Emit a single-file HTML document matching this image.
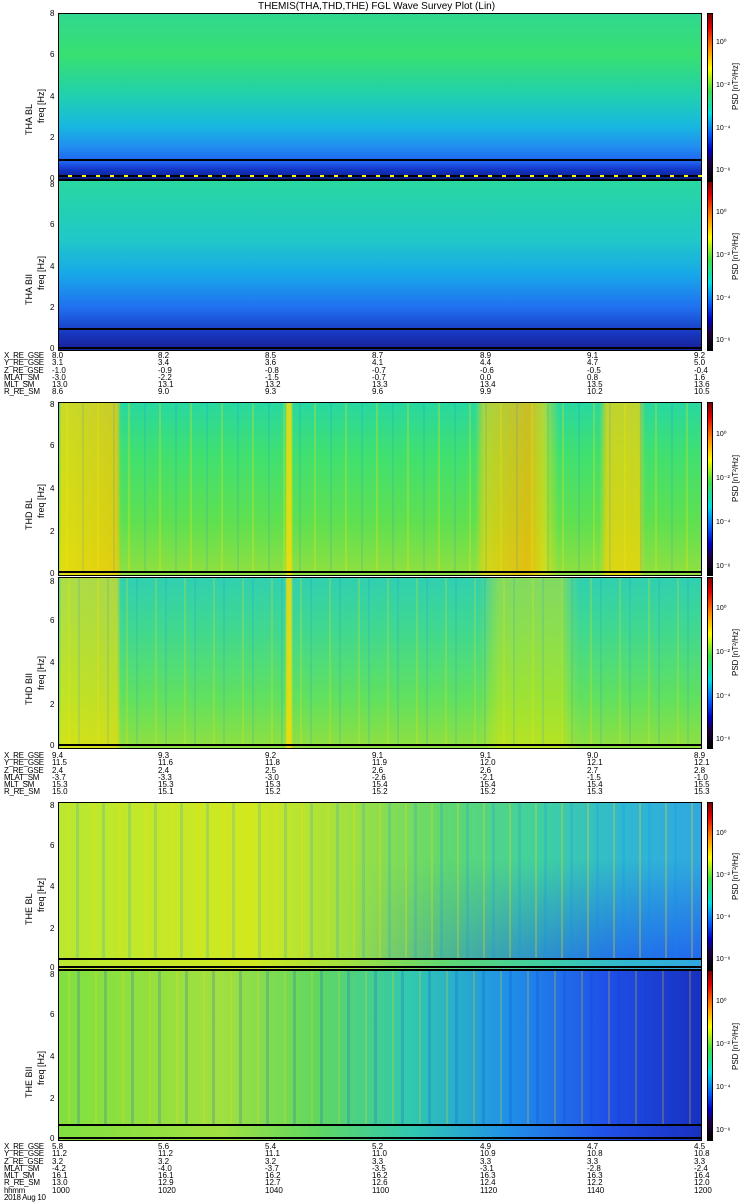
<!DOCTYPE html>
<html><head><meta charset="utf-8"><style>
body{margin:0;width:750px;height:1200px;background:#fff;position:relative;overflow:hidden;font-family:"Liberation Sans",sans-serif;}
.p{position:absolute;left:58px;width:644px;border:1px solid #000;box-sizing:border-box;}
.cb{position:absolute;left:707px;width:6px;border:1px solid #000;box-sizing:border-box;
background:linear-gradient(#7a0000 0%,#e00000 8%,#ff8000 20%,#ffff00 33%,#40e040 46%,#00e0e0 60%,#0060ff 72%,#0000c0 82%,#200040 90%,#000 100%);}
.t{position:absolute;font-size:8px;line-height:7.3px;white-space:pre;color:#000;}
.yl{position:absolute;font-size:9px;transform:rotate(-90deg);transform-origin:left top;white-space:nowrap;}
.ax{position:absolute;font-size:8px;left:50px;}
.bl{position:absolute;left:58px;width:644px;height:2px;background:#000;}
.cl{position:absolute;left:716px;font-size:7px;}
.st{position:absolute;left:59px;width:642px;}
</style></head><body>
<div class="t" style="left:258px;top:2px;font-size:10px;line-height:10px">THEMIS(THA,THD,THE) FGL Wave Survey Plot (Lin)</div>

<!-- THA BL -->
<div class="p" style="top:13px;height:167px;background:linear-gradient(#30d890 0%,#38e070 25%,#20d0b0 50%,#18b8e0 68%,#2090f0 80%,#2060f0 90%,#1030c0 95%,#102080 100%);"></div>
<div class="bl" style="top:159px"></div>
<div class="bl" style="top:175px;background:repeating-linear-gradient(90deg,#000 0 10px,#ff0 10px 14px)"></div>
<!-- THA BII -->
<div class="p" style="top:180px;height:171px;background:linear-gradient(#28d8a0 0%,#20c8c8 35%,#18a8e8 55%,#2070f0 75%,#1838c0 90%,#182098 100%);"></div>
<div class="bl" style="top:328px"></div>
<div class="bl" style="top:347px"></div>
<div class="cb" style="top:13px;height:168px"></div>
<div class="cb" style="top:181px;height:170px"></div>

<!-- THD -->
<div class="p" style="top:402px;height:174px;background:
linear-gradient(90deg,transparent 0,rgba(255,220,0,.75) 2px,rgba(255,200,0,.75) 58px,transparent 62px,transparent 226px,rgba(255,220,0,.8) 228px,rgba(255,220,0,.8) 232px,transparent 234px,transparent 416px,rgba(255,210,0,.6) 425px,rgba(255,180,0,.75) 470px,rgba(255,220,0,.6) 485px,transparent 500px,transparent 540px,rgba(255,210,0,.7) 548px,rgba(255,210,0,.7) 580px,transparent 586px),
linear-gradient(#28d8a0 0%,#40e070 30%,#60e050 70%,#90e040 100%);"></div>
<div class="st" style="top:403px;height:168px;background:repeating-linear-gradient(90deg,transparent 0 7px,rgba(255,230,0,.25) 7px 9px,transparent 9px 23px,rgba(0,120,255,.12) 23px 25px,transparent 25px 31px);"></div>
<div class="bl" style="top:571px"></div>
<div class="p" style="top:577px;height:172px;background:
linear-gradient(90deg,transparent 0,rgba(255,230,0,.6) 2px,rgba(255,220,0,.6) 58px,transparent 62px,transparent 226px,rgba(255,220,0,.8) 228px,rgba(255,220,0,.8) 232px,transparent 234px,transparent 420px,rgba(230,230,0,.45) 440px,rgba(230,230,0,.45) 500px,transparent 520px),
linear-gradient(#30d0b0 0%,#40d890 30%,#60e060 70%,#90e040 100%);"></div>
<div class="st" style="top:578px;height:166px;background:repeating-linear-gradient(90deg,transparent 0 9px,rgba(255,230,0,.2) 9px 11px,transparent 11px 19px,rgba(0,120,255,.12) 19px 21px,transparent 21px 29px);"></div>
<div class="bl" style="top:744px"></div>
<div class="cb" style="top:402px;height:174px"></div>
<div class="cb" style="top:577px;height:172px"></div>

<!-- THE -->
<div class="p" style="top:802px;height:168px;background:
linear-gradient(90deg,#b8e830 0%,#d0e820 30%,#a0e040 45%,#60d870 60%,#40d0a0 75%,#30b8d0 88%,#30a8e0 100%);"></div>
<div class="st" style="top:860px;height:98px;background:linear-gradient(90deg,rgba(30,90,240,0) 45%,rgba(30,90,240,.7) 85%,rgba(30,90,240,.8) 100%);-webkit-mask-image:linear-gradient(180deg,transparent 0%,#000 100%);mask-image:linear-gradient(180deg,transparent 0%,#000 100%);"></div>
<div class="st" style="top:803px;height:155px;background:repeating-linear-gradient(90deg,transparent 0 8px,rgba(255,220,0,.28) 8px 10px,transparent 10px 17px,rgba(0,140,255,.18) 17px 20px,transparent 20px 26px);"></div>
<div class="bl" style="top:958px"></div>
<div class="bl" style="top:966px"></div>
<div class="p" style="top:970px;height:171px;background:
linear-gradient(90deg,#80e040 0%,#a0e040 25%,#60d860 40%,#30c8b0 55%,#2090e8 70%,#2050e8 85%,#1830c0 100%);"></div>
<div class="st" style="top:971px;height:153px;background:repeating-linear-gradient(90deg,transparent 0 9px,rgba(255,220,0,.22) 9px 11px,transparent 11px 18px,rgba(0,60,220,.18) 18px 21px,transparent 21px 27px);"></div>
<div class="bl" style="top:1124px"></div>
<div class="bl" style="top:1137px"></div>
<div class="cb" style="top:802px;height:168px"></div>
<div class="cb" style="top:970px;height:171px"></div>

<!-- y labels -->
<div class="yl" style="left:24px;top:135px">THA BL</div><div class="yl" style="left:36px;top:123px">freq [Hz]</div>
<div class="yl" style="left:24px;top:305px">THA BII</div><div class="yl" style="left:36px;top:290px">freq [Hz]</div>
<div class="yl" style="left:24px;top:530px">THD BL</div><div class="yl" style="left:36px;top:518px">freq [Hz]</div>
<div class="yl" style="left:24px;top:705px">THD BII</div><div class="yl" style="left:36px;top:690px">freq [Hz]</div>
<div class="yl" style="left:24px;top:925px">THE BL</div><div class="yl" style="left:36px;top:912px">freq [Hz]</div>
<div class="yl" style="left:24px;top:1098px">THE BII</div><div class="yl" style="left:36px;top:1085px">freq [Hz]</div>

<div class="ax" style="top:9px">8</div><div class="ax" style="top:50px">6</div><div class="ax" style="top:92px">4</div><div class="ax" style="top:133px">2</div><div class="ax" style="top:174px">0</div>
<div class="ax" style="top:180px">8</div><div class="ax" style="top:220px">6</div><div class="ax" style="top:262px">4</div><div class="ax" style="top:303px">2</div><div class="ax" style="top:344px">0</div>
<div class="ax" style="top:400px">8</div><div class="ax" style="top:441px">6</div><div class="ax" style="top:484px">4</div><div class="ax" style="top:527px">2</div><div class="ax" style="top:569px">0</div>
<div class="ax" style="top:577px">8</div><div class="ax" style="top:616px">6</div><div class="ax" style="top:658px">4</div><div class="ax" style="top:700px">2</div><div class="ax" style="top:741px">0</div>
<div class="ax" style="top:801px">8</div><div class="ax" style="top:841px">6</div><div class="ax" style="top:882px">4</div><div class="ax" style="top:924px">2</div><div class="ax" style="top:963px">0</div>
<div class="ax" style="top:970px">8</div><div class="ax" style="top:1010px">6</div><div class="ax" style="top:1052px">4</div><div class="ax" style="top:1094px">2</div><div class="ax" style="top:1134px">0</div>

<div class="cl" style="top:38px">10⁰</div><div class="cl" style="top:81px">10⁻²</div><div class="cl" style="top:124px">10⁻⁴</div><div class="cl" style="top:166px">10⁻⁶</div>
<div class="cl" style="top:208px">10⁰</div><div class="cl" style="top:251px">10⁻²</div><div class="cl" style="top:294px">10⁻⁴</div><div class="cl" style="top:336px">10⁻⁶</div>
<div class="cl" style="top:430px">10⁰</div><div class="cl" style="top:474px">10⁻²</div><div class="cl" style="top:518px">10⁻⁴</div><div class="cl" style="top:562px">10⁻⁶</div>
<div class="cl" style="top:604px">10⁰</div><div class="cl" style="top:648px">10⁻²</div><div class="cl" style="top:692px">10⁻⁴</div><div class="cl" style="top:735px">10⁻⁶</div>
<div class="cl" style="top:829px">10⁰</div><div class="cl" style="top:871px">10⁻²</div><div class="cl" style="top:913px">10⁻⁴</div><div class="cl" style="top:955px">10⁻⁶</div>
<div class="cl" style="top:997px">10⁰</div><div class="cl" style="top:1040px">10⁻²</div><div class="cl" style="top:1083px">10⁻⁴</div><div class="cl" style="top:1126px">10⁻⁶</div>
<div class="yl" style="left:731px;top:110px;font-size:8px">PSD [nT²/Hz]</div>
<div class="yl" style="left:731px;top:280px;font-size:8px">PSD [nT²/Hz]</div>
<div class="yl" style="left:731px;top:502px;font-size:8px">PSD [nT²/Hz]</div>
<div class="yl" style="left:731px;top:676px;font-size:8px">PSD [nT²/Hz]</div>
<div class="yl" style="left:731px;top:900px;font-size:8px">PSD [nT²/Hz]</div>
<div class="yl" style="left:731px;top:1070px;font-size:8px">PSD [nT²/Hz]</div>

<!-- ephemeris 1 -->
<div class="t" style="left:4px;top:352px;letter-spacing:-0.3px">X_RE_GSE
Y_RE_GSE
Z_RE_GSE
MLAT_SM
MLT_SM
R_RE_SM</div>
<div class="t" style="left:52px;top:352px">8.0
3.1
-1.0
-3.0
13.0
8.6</div>
<div class="t" style="left:158px;top:352px">8.2
3.4
-0.9
-2.2
13.1
9.0</div>
<div class="t" style="left:265px;top:352px">8.5
3.6
-0.8
-1.5
13.2
9.3</div>
<div class="t" style="left:372px;top:352px">8.7
4.1
-0.7
-0.7
13.3
9.6</div>
<div class="t" style="left:480px;top:352px">8.9
4.4
-0.6
0.0
13.4
9.9</div>
<div class="t" style="left:587px;top:352px">9.1
4.7
-0.5
0.8
13.5
10.2</div>
<div class="t" style="left:694px;top:352px">9.2
5.0
-0.4
1.6
13.6
10.5</div>

<!-- ephemeris 2 -->
<div class="t" style="left:4px;top:752px;letter-spacing:-0.3px">X_RE_GSE
Y_RE_GSE
Z_RE_GSE
MLAT_SM
MLT_SM
R_RE_SM</div>
<div class="t" style="left:52px;top:752px">9.4
11.5
2.4
-3.7
15.3
15.0</div>
<div class="t" style="left:158px;top:752px">9.3
11.6
2.4
-3.3
15.3
15.1</div>
<div class="t" style="left:265px;top:752px">9.2
11.8
2.5
-3.0
15.3
15.2</div>
<div class="t" style="left:372px;top:752px">9.1
11.9
2.6
-2.6
15.4
15.2</div>
<div class="t" style="left:480px;top:752px">9.1
12.0
2.6
-2.1
15.4
15.2</div>
<div class="t" style="left:587px;top:752px">9.0
12.1
2.7
-1.5
15.4
15.3</div>
<div class="t" style="left:694px;top:752px">8.9
12.1
2.8
-1.0
15.5
15.3</div>

<!-- ephemeris 3 -->
<div class="t" style="left:4px;top:1143px;letter-spacing:-0.3px">X_RE_GSE
Y_RE_GSE
Z_RE_GSE
MLAT_SM
MLT_SM
R_RE_SM
hhmm
2018 Aug 10</div>
<div class="t" style="left:52px;top:1143px">5.8
11.2
3.2
-4.2
16.1
13.0
1000</div>
<div class="t" style="left:158px;top:1143px">5.6
11.2
3.2
-4.0
16.1
12.9
1020</div>
<div class="t" style="left:265px;top:1143px">5.4
11.1
3.2
-3.7
16.2
12.7
1040</div>
<div class="t" style="left:372px;top:1143px">5.2
11.0
3.3
-3.5
16.2
12.6
1100</div>
<div class="t" style="left:480px;top:1143px">4.9
10.9
3.3
-3.1
16.3
12.4
1120</div>
<div class="t" style="left:587px;top:1143px">4.7
10.8
3.3
-2.8
16.3
12.2
1140</div>
<div class="t" style="left:694px;top:1143px">4.5
10.8
3.3
-2.4
16.4
12.0
1200</div>
</body></html>
